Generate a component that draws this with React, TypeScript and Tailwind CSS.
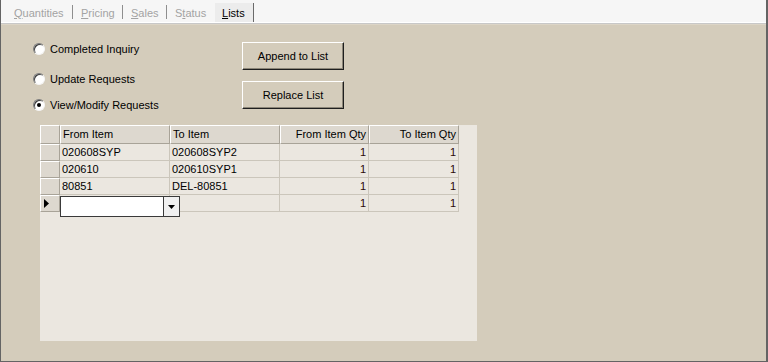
import React from "react";

const font = { fontFamily: '"Liberation Sans", Arial, sans-serif' };

function Radio({ checked, label }: { checked?: boolean; label: string }) {
  return (
    <div className="flex items-center h-[14px]">
      <div className="w-[12px] h-[12px] rounded-full bg-white border border-t-[#7a7a7a] border-l-[#7a7a7a] border-b-[#f4f4f4] border-r-[#f4f4f4] shadow-[inset_1px_1px_0_#3c3c3c] flex items-center justify-center">
        {checked && <div className="w-[4px] h-[4px] rounded-full bg-black" />}
      </div>
      <span className="ml-[5px] text-[11px] text-black leading-[14px]">{label}</span>
    </div>
  );
}

function Btn({ label }: { label: string }) {
  return (
    <div className="w-[102px] h-[28px] bg-[#d4ccbb] border border-t-white border-l-white border-b-[#1e1e1e] border-r-[#1e1e1e] shadow-[inset_-1px_-1px_0_#8c8678] flex items-center justify-center text-[11px] text-black">
      {label}
    </div>
  );
}

function Tab({ w, pl, children, sep = true }: { w: number; pl: number; children: React.ReactNode; sep?: boolean }) {
  return (
    <>
      <div className="h-[22px] flex items-center pt-[4px] text-[11px] text-[#a3a3a3]" style={{ width: w, paddingLeft: pl }}>
        <span>{children}</span>
      </div>
      {sep && <div className="w-px h-[14px] mt-[5px] bg-[#8e8e8e]" />}
    </>
  );
}

const rows = [
  ["020608SYP", "020608SYP2", "1", "1"],
  ["020610", "020610SYP1", "1", "1"],
  ["80851", "DEL-80851", "1", "1"],
];

const cols = [110, 110, 89, 90];

function HeaderCell({ w, text, right }: { w: number; text: string; right?: boolean }) {
  return (
    <div
      className={`h-[19px] bg-[#ddd8cf] border-t border-l border-t-white border-l-white border-r border-b border-r-[#a8a398] border-b-[#a8a398] flex items-center text-[11px] text-black px-[2px] ${right ? "justify-end" : ""}`}
      style={{ width: w }}
    >
      {text}
    </div>
  );
}

function Cell({ w, text, right }: { w: number; text: string; right?: boolean }) {
  return (
    <div
      className={`h-[17px] border-r border-b border-[#cbc6bb] flex items-center text-[11px] px-[2px] ${right ? "justify-end text-[#2a0808]" : "text-black"}`}
      style={{ width: w }}
    >
      {text}
    </div>
  );
}

function RowHead({ arrow }: { arrow?: boolean }) {
  return (
    <div className="w-[20px] h-[17px] bg-[#ddd8cf] border-t border-l border-t-white border-l-white border-r border-b border-r-[#a8a398] border-b-[#a8a398] flex items-center pl-[3px]">
      {arrow && (
        <svg width="5" height="9" viewBox="0 0 5 9">
          <path d="M0 0 L5 4.5 L0 9 Z" fill="#000" />
        </svg>
      )}
    </div>
  );
}

export default function App() {
  return (
    <div className="w-[768px] h-[362px] bg-[#d4ccbb] flex flex-col border-l border-b border-r-2 border-[#646464] overflow-hidden" style={font}>
      {/* tab strip */}
      <div className="h-[22px] bg-[#f6f6f6] flex items-start">
        <Tab w={71} pl={13}>
          <u>Q</u>uantities
        </Tab>
        <Tab w={49} pl={8}>
          <u>P</u>ricing
        </Tab>
        <Tab w={43} pl={8}>
          <u>S</u>ales
        </Tab>
        <Tab w={48} pl={8} sep={false}>
          S<u>t</u>atus
        </Tab>
        <div className="mt-[3px] h-[19px] w-[39px] bg-[#ececec] border-r border-[#6a6a6a] flex items-center pt-[1px] pl-[7px] text-[11px] text-black">
          <span>
            <u>L</u>ists
          </span>
        </div>
      </div>
      <div className="h-px bg-white" />
      <div className="h-px bg-[#c8c8c8]" />
      <div className="h-px bg-[#dcd5c7]" />

      {/* content */}
      <div className="flex-1 flex flex-col">
        <div className="h-[100px] flex pl-[32px]">
          <div className="flex flex-col pt-[17px] w-[209px]">
            <Radio label="Completed Inquiry" />
            <div className="h-[16px]" />
            <Radio label="Update Requests" />
            <div className="h-[12px]" />
            <Radio checked label="View/Modify Requests" />
          </div>
          <div className="flex flex-col pt-[17px] gap-[11px]">
            <Btn label="Append to List" />
            <Btn label="Replace List" />
          </div>
        </div>

        <div className="ml-[39px] w-[437px] h-[216px] bg-[#ebe7e0] relative">
          <div className="flex">
            <div className="w-[20px] h-[19px] bg-[#ddd8cf] border-t border-l border-t-white border-l-white border-r border-b border-r-[#a8a398] border-b-[#a8a398]" />
            <HeaderCell w={cols[0]} text="From Item" />
            <HeaderCell w={cols[1]} text="To Item" />
            <HeaderCell w={cols[2]} text="From Item Qty" right />
            <HeaderCell w={cols[3]} text="To Item Qty" right />
          </div>
          {rows.map((r, i) => (
            <div className="flex" key={i}>
              <RowHead />
              <Cell w={cols[0]} text={r[0]} />
              <Cell w={cols[1]} text={r[1]} />
              <Cell w={cols[2]} text={r[2]} right />
              <Cell w={cols[3]} text={r[3]} right />
            </div>
          ))}
          <div className="flex">
            <RowHead arrow />
            <Cell w={cols[0]} text="" />
            <Cell w={cols[1]} text="" />
            <Cell w={cols[2]} text="1" right />
            <Cell w={cols[3]} text="1" right />
          </div>
          {/* editing combo */}
          <div className="absolute left-[20px] top-[71px] w-[120px] h-[21px] bg-white border border-[#3a3a3a] flex justify-end">
            <div className="w-[16px] h-full border-l border-[#3a3a3a] bg-[#f0f0f0] flex items-center justify-center">
              <svg width="7" height="4" viewBox="0 0 7 4">
                <path d="M0 0 L7 0 L3.5 4 Z" fill="#000" />
              </svg>
            </div>
          </div>
        </div>
      </div>
    </div>
  );
}
